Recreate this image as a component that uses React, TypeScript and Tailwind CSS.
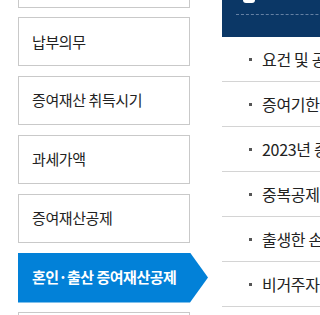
import React from "react";

const items = ["납부의무", "증여재산 취득시기", "과세가액", "증여재산공제"];
const rows = [
  "요건 및 공제한도",
  "증여기한 및 적용",
  "2023년 증여분",
  "중복공제 배제",
  "출생한 손자녀",
  "비거주자 적용",
];

export default function App() {
  return (
    <div className="w-[320px] h-[315px] overflow-hidden bg-white flex font-['Noto_Sans_CJK_KR',sans-serif] text-[#222]">
      <div className="w-[222px] shrink-0 pl-[18px] flex flex-col gap-[9.8px] -mt-[41.4px]">
        <div className="w-[172px] h-[49px] border border-[#c9c9c9] shrink-0" />
        {items.map((t) => (
          <div
            key={t}
            className="w-[172px] h-[49px] border border-[#c9c9c9] flex items-center pl-[13px] text-[15px] tracking-[-0.4px] shrink-0"
          >
            {t}
          </div>
        ))}
        <div className="w-[190px] h-[50px] bg-[#0281d8] [clip-path:polygon(0_0,172px_0,190px_50%,172px_100%,0_100%)] flex items-center pl-[14px] text-white font-bold text-[15px] tracking-[-0.5px] shrink-0">
          혼인·출산 증여재산공제
        </div>
        <div className="w-[172px] h-[49px] border border-[#c9c9c9] shrink-0" />
      </div>
      <div className="w-[300px] shrink-0 flex flex-col">
        <div className="h-[37px] bg-[#0b3766] flex flex-col pl-[14px] shrink-0">
          <div className="ml-[7px] w-[12px] h-[3px] bg-white rounded-b-full" />
          <div className="mt-[11px] border-t border-dashed border-[#6580a3]" />
        </div>
        {rows.map((r) => (
          <div
            key={r}
            className="h-[45px] border-b border-[#d4d4d4] flex items-center pl-[27px] text-[16px] tracking-[-0.3px] whitespace-nowrap shrink-0"
          >
            <span className="w-[3px] h-[3px] bg-[#555] mr-[10px] shrink-0" />
            {r}
          </div>
        ))}
      </div>
    </div>
  );
}
